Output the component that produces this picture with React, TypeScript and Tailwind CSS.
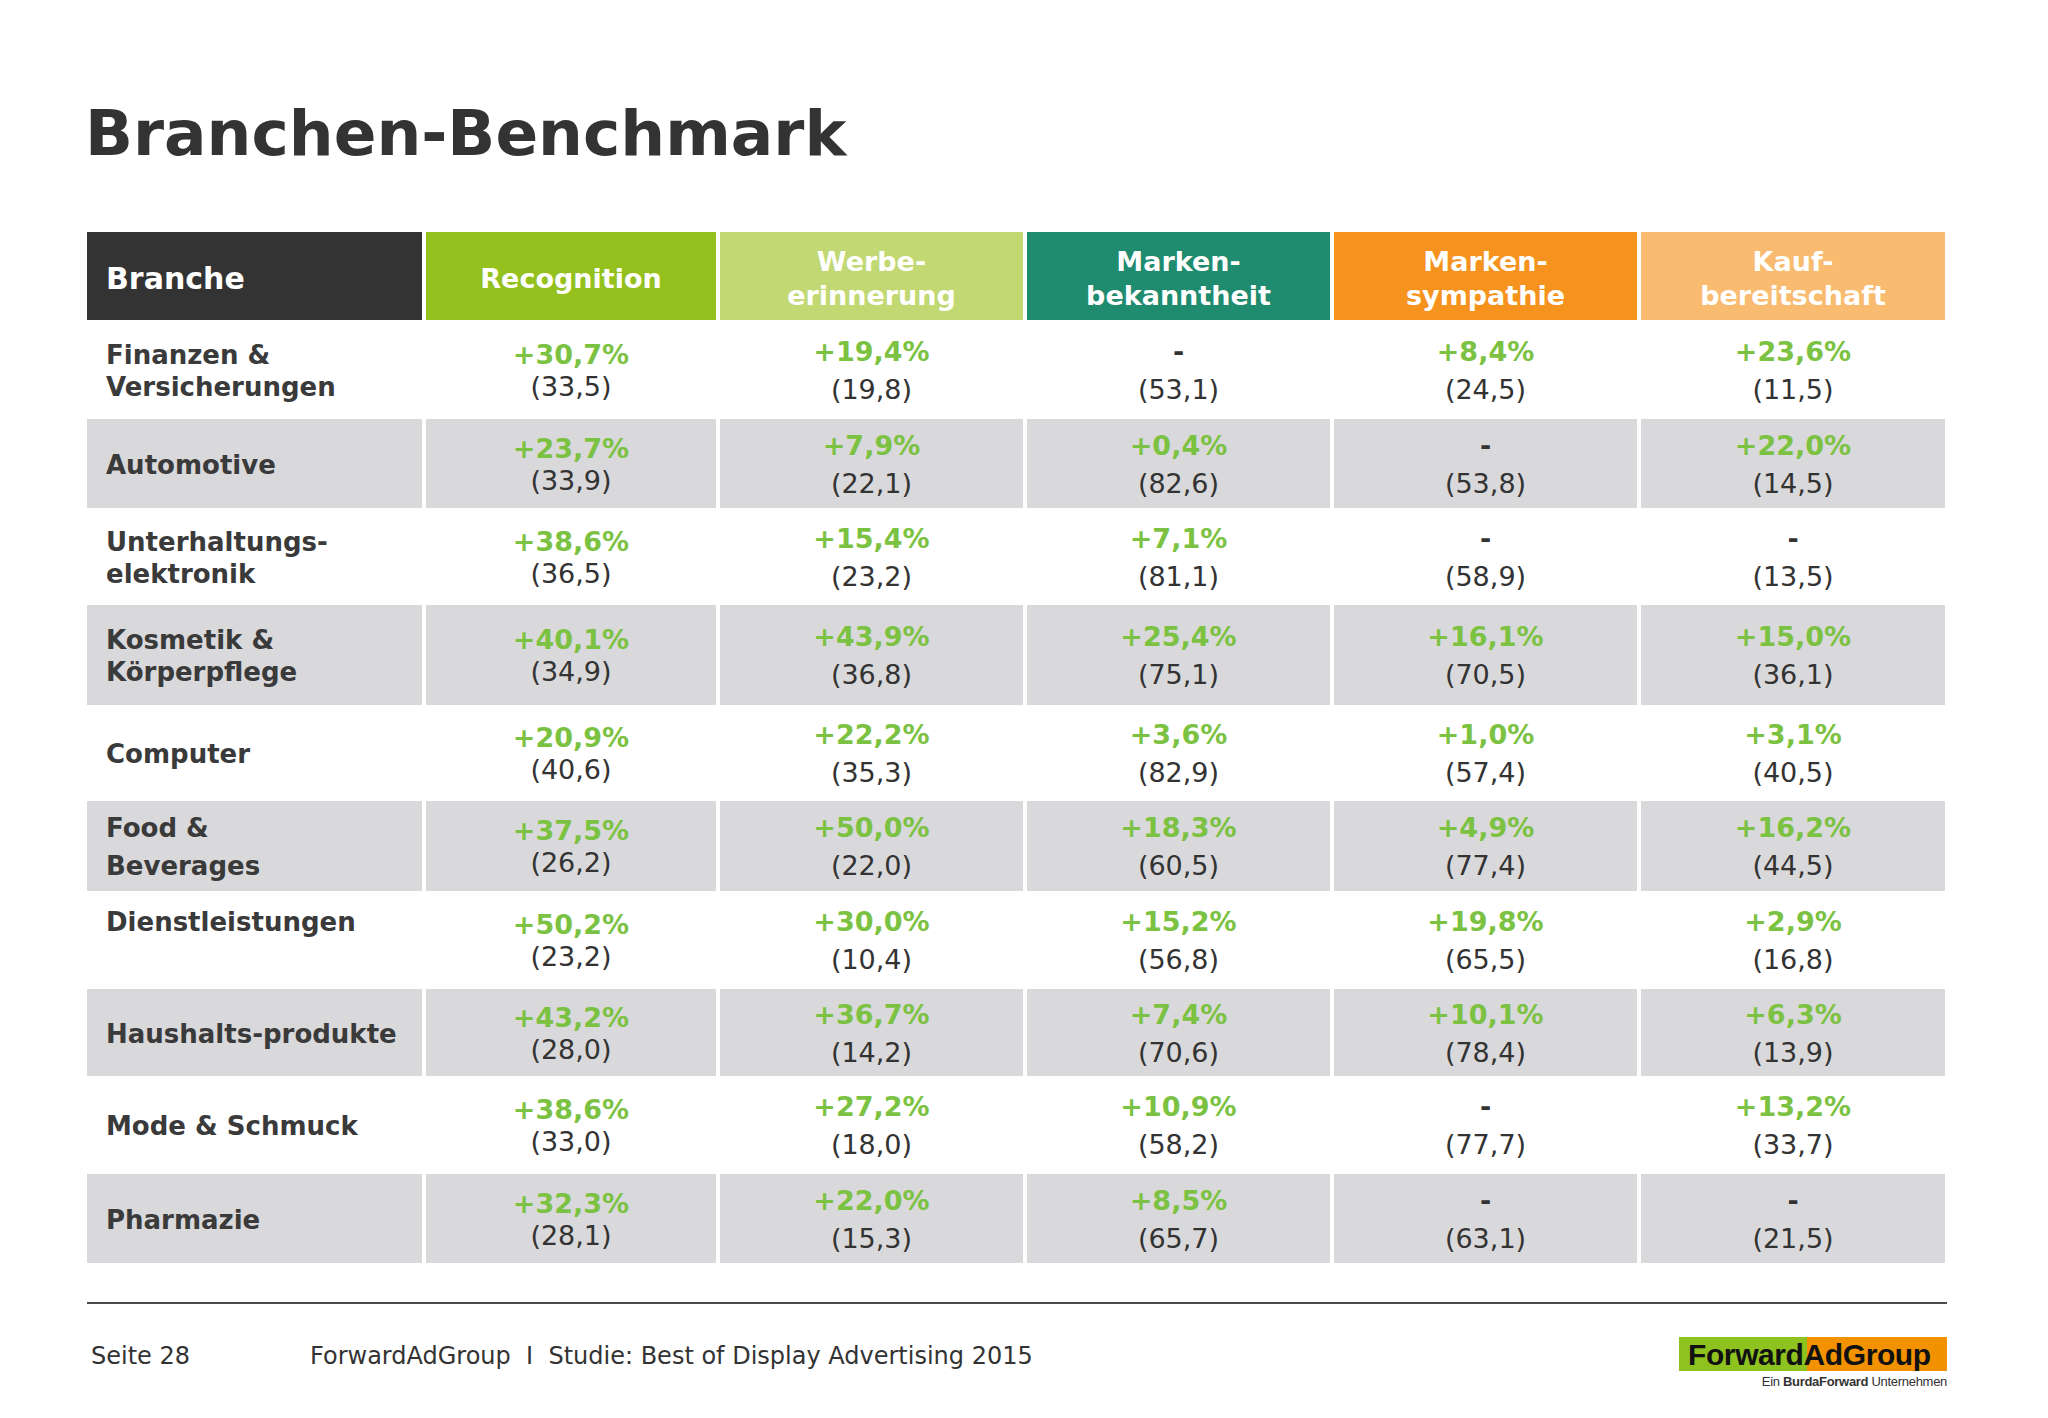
type Row = {
  label: string[];
  h: string;
  grey: boolean;
  top?: boolean;
  labelLeading?: string;
  vals: [string, string][];
};

const rows: Row[] = [
  {
    label: ['Finanzen &', 'Versicherungen'],
    h: 'h-[91px]',
    grey: false,
    vals: [
      ['+30,7%', '(33,5)'],
      ['+19,4%', '(19,8)'],
      ['-', '(53,1)'],
      ['+8,4%', '(24,5)'],
      ['+23,6%', '(11,5)'],
    ],
  },
  {
    label: ['Automotive'],
    h: 'h-[89px]',
    grey: true,
    vals: [
      ['+23,7%', '(33,9)'],
      ['+7,9%', '(22,1)'],
      ['+0,4%', '(82,6)'],
      ['-', '(53,8)'],
      ['+22,0%', '(14,5)'],
    ],
  },
  {
    label: ['Unterhaltungs-', 'elektronik'],
    h: 'h-[89px]',
    grey: false,
    vals: [
      ['+38,6%', '(36,5)'],
      ['+15,4%', '(23,2)'],
      ['+7,1%', '(81,1)'],
      ['-', '(58,9)'],
      ['-', '(13,5)'],
    ],
  },
  {
    label: ['Kosmetik &', 'Körperpflege'],
    h: 'h-[100px]',
    grey: true,
    vals: [
      ['+40,1%', '(34,9)'],
      ['+43,9%', '(36,8)'],
      ['+25,4%', '(75,1)'],
      ['+16,1%', '(70,5)'],
      ['+15,0%', '(36,1)'],
    ],
  },
  {
    label: ['Computer'],
    h: 'h-[88px]',
    grey: false,
    vals: [
      ['+20,9%', '(40,6)'],
      ['+22,2%', '(35,3)'],
      ['+3,6%', '(82,9)'],
      ['+1,0%', '(57,4)'],
      ['+3,1%', '(40,5)'],
    ],
  },
  {
    label: ['Food &', 'Beverages'],
    h: 'h-[90px]',
    grey: true,
    labelLeading: 'leading-[38px]',
    vals: [
      ['+37,5%', '(26,2)'],
      ['+50,0%', '(22,0)'],
      ['+18,3%', '(60,5)'],
      ['+4,9%', '(77,4)'],
      ['+16,2%', '(44,5)'],
    ],
  },
  {
    label: ['Dienstleistungen'],
    h: 'h-[90px]',
    grey: false,
    top: true,
    vals: [
      ['+50,2%', '(23,2)'],
      ['+30,0%', '(10,4)'],
      ['+15,2%', '(56,8)'],
      ['+19,8%', '(65,5)'],
      ['+2,9%', '(16,8)'],
    ],
  },
  {
    label: ['Haushalts-produkte'],
    h: 'h-[87px]',
    grey: true,
    vals: [
      ['+43,2%', '(28,0)'],
      ['+36,7%', '(14,2)'],
      ['+7,4%', '(70,6)'],
      ['+10,1%', '(78,4)'],
      ['+6,3%', '(13,9)'],
    ],
  },
  {
    label: ['Mode & Schmuck'],
    h: 'h-[90px]',
    grey: false,
    vals: [
      ['+38,6%', '(33,0)'],
      ['+27,2%', '(18,0)'],
      ['+10,9%', '(58,2)'],
      ['-', '(77,7)'],
      ['+13,2%', '(33,7)'],
    ],
  },
  {
    label: ['Pharmazie'],
    h: 'h-[89px]',
    grey: true,
    vals: [
      ['+32,3%', '(28,1)'],
      ['+22,0%', '(15,3)'],
      ['+8,5%', '(65,7)'],
      ['-', '(63,1)'],
      ['-', '(21,5)'],
    ],
  },
];

const columns = [
  { title: ['Recognition'], bg: 'bg-[#95c11f]', w: 'w-[290px]' },
  { title: ['Werbe-', 'erinnerung'], bg: 'bg-[#c1d873]', w: 'w-[303px]' },
  { title: ['Marken-', 'bekanntheit'], bg: 'bg-[#1f8b6f]', w: 'w-[303px]' },
  { title: ['Marken-', 'sympathie'], bg: 'bg-[#f6931f]', w: 'w-[303px]' },
  { title: ['Kauf-', 'bereitschaft'], bg: 'bg-[#f9bb6f]', w: 'w-[304px]' },
];

function ValueCell({ change, base, tight }: { change: string; base: string; tight: boolean }) {
  const lead = tight ? 'leading-[32px]' : 'leading-[38px]';
  return (
    <div className="flex flex-col items-center justify-center pt-[2px]">
      <div className={`text-[27px] font-bold ${lead} ${change === '-' ? 'text-[#333333]' : 'text-[#7cc242]'}`}>
        {change}
      </div>
      <div className={`text-[27px] text-[#333333] ${lead}`}>{base}</div>
    </div>
  );
}

function HeaderRow() {
  return (
    <div className="flex gap-[4px] h-[88px]">
      <div className="w-[335px] bg-[#333333] flex items-center pl-[19px] pt-[4px] text-[30px] font-bold text-white">
        Branche
      </div>
      {columns.map((col) => (
        <div
          key={col.title.join('')}
          className={`${col.w} ${col.bg} flex flex-col items-center justify-center pt-[5px] text-[27px] leading-[34px] font-bold text-white`}
        >
          {col.title.map((t) => (
            <div key={t}>{t}</div>
          ))}
        </div>
      ))}
    </div>
  );
}

function DataRow({ row }: { row: Row }) {
  const bg = row.grey ? 'bg-[#d9d8da]' : 'bg-white';
  return (
    <div className={`flex gap-[4px] ${row.h}`}>
      <div
        className={`w-[335px] ${bg} flex flex-col pl-[19px] ${row.top ? 'justify-start pt-[11px]' : 'justify-center pt-[2px]'}`}
      >
        {row.label.map((l) => (
          <div key={l} className={`text-[26px] font-bold text-[#3a3a3a] ${row.labelLeading ?? 'leading-[32px]'}`}>
            {l}
          </div>
        ))}
      </div>
      {row.vals.map(([change, base], i) => (
        <div key={i} className={`${columns[i].w} ${bg} flex items-center justify-center`}>
          <ValueCell change={change} base={base} tight={i === 0} />
        </div>
      ))}
    </div>
  );
}

function Logo() {
  return (
    <div className="flex flex-col items-end">
      <div className="relative w-[268px] h-[34px] flex">
        <div className="w-[128px] h-full bg-[#8dc21f]"></div>
        <div className="flex-1 h-full bg-[#f39200]"></div>
        <div
          className="absolute inset-0 flex items-center pl-[9px] text-[30px] font-bold text-[#111111] tracking-[-0.4px]"
          style={{ fontFamily: '"Liberation Sans", Arial, sans-serif' }}
        >
          ForwardAdGroup
        </div>
      </div>
      <div
        className="mt-[3px] text-[13px] leading-[15px] text-[#333333] tracking-[-0.3px]"
        style={{ fontFamily: '"Liberation Sans", Arial, sans-serif' }}
      >
        Ein <span className="font-bold">BurdaForward</span> Unternehmen
      </div>
    </div>
  );
}

export default function App() {
  return (
    <div
      className="w-[2048px] h-[1418px] bg-white overflow-hidden"
      style={{ fontFamily: '"DejaVu Sans", Verdana, sans-serif' }}
    >
      <div className="pl-[85px] pt-[102px]">
        <h1 className="text-[63px] leading-[64px] font-bold text-[#333333]">Branchen-Benchmark</h1>
      </div>

      <div className="ml-[87px] mt-[66px] flex flex-col gap-[4px] w-[1859px]">
        <HeaderRow />
        {rows.map((row) => (
          <DataRow key={row.label.join('')} row={row} />
        ))}
      </div>

      <div className="ml-[87px] mt-[39px] w-[1860px] h-[2px] bg-[#4a4a4a]"></div>

      <div className="ml-[87px] w-[1860px] mt-[33px] flex justify-between items-start">
        <div className="flex pl-[4px] pt-[5px] text-[24px] leading-[28px] text-[#333333]">
          <span className="w-[219px]">Seite 28</span>
          <span>ForwardAdGroup&nbsp;&nbsp;I&nbsp;&nbsp;Studie: Best of Display Advertising 2015</span>
        </div>
        <Logo />
      </div>
    </div>
  );
}
